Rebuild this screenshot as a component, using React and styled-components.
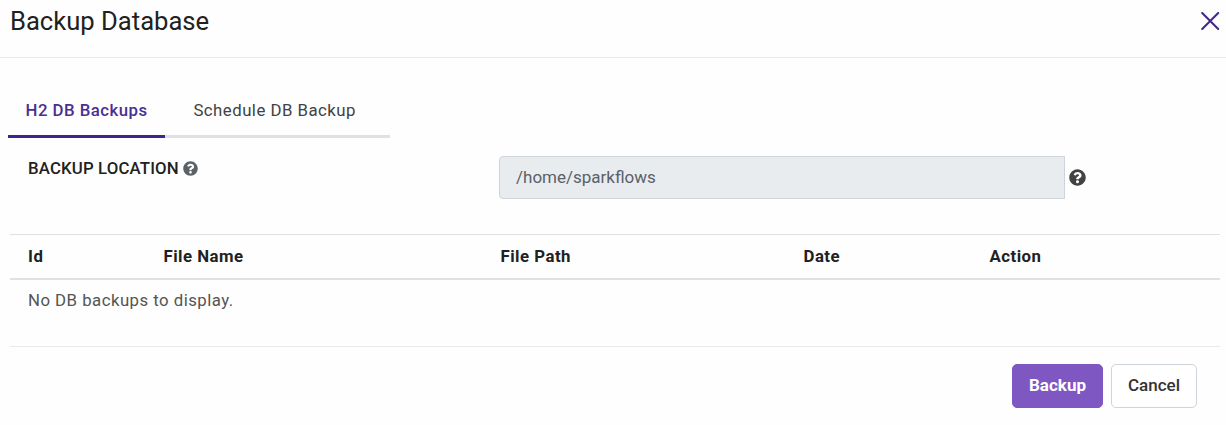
import React from "react";
import styled, { createGlobalStyle } from "styled-components";
import { FaQuestionCircle } from "react-icons/fa";

const GlobalStyle = createGlobalStyle`
  *, *::before, *::after { box-sizing: border-box; }
  body {
    margin: 0;
    background: #fefefe;
    color: #212121;
    font-family: Roboto, "Liberation Sans", sans-serif;
    font-size: 17px;
    overflow: hidden;
  }
`;

const Dialog = styled.div`
  display: flex;
  flex-direction: column;
  width: 1226px;
  height: 425px;
`;

const Header = styled.header`
  display: flex;
  justify-content: space-between;
  align-items: flex-start;
  height: 58px;
  padding: 5px 6px 0 10px;
  border-bottom: 1px solid #e9e9eb;
`;

const Title = styled.h1`
  margin: 0;
  font-size: 25.6px;
  font-weight: 400;
  line-height: 32px;
  letter-spacing: 0;
`;

const CloseButton = styled.button`
  display: flex;
  margin: 7px 0 0;
  padding: 0;
  border: 0;
  background: none;
  color: #41258a;
`;

const Tabs = styled.nav`
  display: flex;
  margin: 27px 0 0 8px;
`;

const Tab = styled.button`
  width: ${(p) => p.$width}px;
  height: 53px;
  padding: 0 0 0 ${(p) => p.$inset}px;
  border: 0;
  border-bottom: 3px solid ${(p) => (p.$active ? "#41258a" : "#dee2e6")};
  background: none;
  color: ${(p) => (p.$active ? "#4a2f92" : "#424242")};
  font: ${(p) => (p.$active ? 500 : 400)} 16.8px/20px Roboto, sans-serif;
  letter-spacing: 0.48px;
  text-align: left;
  white-space: nowrap;
`;

const Field = styled.div`
  display: flex;
  height: 96px;
  padding: 18px 0 0 28px;
`;

const Label = styled.label`
  display: flex;
  align-items: center;
  gap: 4px;
  width: 471px;
  height: 24px;
  font-size: 16.8px;
  font-weight: 500;
  letter-spacing: 0.15px;
  svg { color: #5a6268; }
`;

const InputGroup = styled.div`
  display: flex;
  align-items: center;
  gap: 4px;
  height: 43px;
  svg { color: #424242; margin: 0 0 1px -0.5px; }
`;

const Input = styled.input`
  width: 566px;
  height: 43px;
  padding: 0 16px 2px;
  border: 1px solid #ced4da;
  border-radius: 4px 0 0 4px;
  background: #e9ecef;
  color: #5a6067;
  font: 400 17px/20px Roboto, sans-serif;
  letter-spacing: 0;
`;

const Table = styled.section`
  display: flex;
  flex-direction: column;
  height: 113px;
  margin: 0 6px 0 10px;
  border-top: 1px solid #e0e0e0;
  border-bottom: 1px solid #e9e9eb;
`;

const HeadRow = styled.div`
  display: grid;
  grid-template-columns: 135.5px 337px 303px 186px 1fr;
  align-items: center;
  height: 45px;
  padding: 0 0 2px 18px;
  border-bottom: 2px solid #dee2e6;
  font-size: 16.8px;
  font-weight: 700;
  letter-spacing: 0.48px;
`;

const EmptyRow = styled.div`
  padding: 10px 18px;
  color: #545454;
  font-size: 16.8px;
  line-height: 20px;
  letter-spacing: 0.47px;
`;

const Footer = styled.footer`
  display: flex;
  justify-content: flex-end;
  gap: 8px;
  padding: 17px 29px 0 0;
`;

const Button = styled.button`
  width: ${(p) => p.$width}px;
  height: 44px;
  padding: 0 0 2px;
  border: 1px solid ${(p) => (p.$primary ? "#7e57c2" : "#ced4da")};
  border-radius: 5px;
  background: ${(p) => (p.$primary ? "#7e57c2" : "#fff")};
  color: ${(p) => (p.$primary ? "#fff" : "#333")};
  font: ${(p) => (p.$primary ? 700 : 500)} 17px/20px Roboto, sans-serif;
`;

export default function App() {
  return (
    <>
      <GlobalStyle />
      <Dialog>
        <Header>
          <Title>Backup Database</Title>
          <CloseButton aria-label="Close">
            <svg width="19" height="19" viewBox="0 0 19 19" fill="none" stroke="currentColor" strokeWidth="2" strokeLinecap="round">
              <path d="M1.2 1L17.2 17M17.2 1L1.2 17" />
            </svg>
          </CloseButton>
        </Header>
        <Tabs>
          <Tab $active $width={157} $inset={17.5}>H2 DB Backups</Tab>
          <Tab $width={225} $inset={28.4}>Schedule DB Backup</Tab>
        </Tabs>
        <Field>
          <Label><span>BACKUP LOCATION</span><FaQuestionCircle size={15} /></Label>
          <InputGroup>
            <Input readOnly value="/home/sparkflows" />
            <FaQuestionCircle size={17} />
          </InputGroup>
        </Field>
        <Table>
          <HeadRow>
            <span>Id</span>
            <span>File Name</span>
            <span>File Path</span>
            <span>Date</span>
            <span>Action</span>
          </HeadRow>
          <EmptyRow>No DB backups to display.</EmptyRow>
        </Table>
        <Footer>
          <Button $primary $width={91}>Backup</Button>
          <Button $width={86}>Cancel</Button>
        </Footer>
      </Dialog>
    </>
  );
}
